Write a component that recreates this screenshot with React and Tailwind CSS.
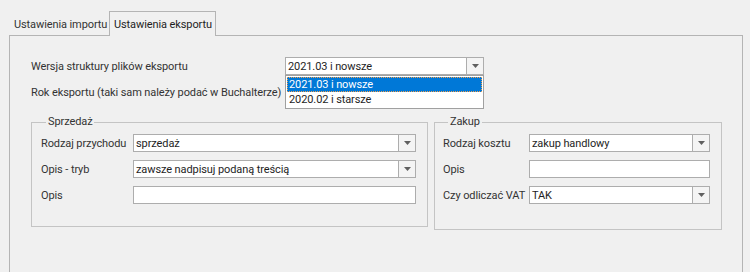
import React from "react";

const font = { fontFamily: 'Roboto, "Liberation Sans", Arial, sans-serif', letterSpacing: "-0.1px" };

function Arrow() {
  return (
    <svg width="7" height="4" viewBox="0 0 7 4">
      <polygon points="0,0 7,0 3.5,4" fill="#606060" />
    </svg>
  );
}

function Combo({ value, w }) {
  return (
    <div className={`flex h-[18px] border border-[#adadad] bg-white ${w}`}>
      <div className="flex flex-1 items-center whitespace-nowrap pl-[2px] text-[11px] leading-none text-[#1e1e1e]">{value}</div>
      <div className="flex w-[17px] items-center justify-center border-l border-[#adadad] bg-[#f4f4f4]">
        <Arrow />
      </div>
    </div>
  );
}

function TextBox({ w }) {
  return <div className={`h-[18px] border border-[#adadad] bg-white ${w}`} />;
}

function Row({ label, labelW, children }) {
  return (
    <div className="flex items-center">
      <div className={`${labelW} shrink-0 whitespace-nowrap text-[11px] leading-none text-[#333]`}>{label}</div>
      {children}
    </div>
  );
}

export default function App() {
  return (
    <div className="relative h-[272px] w-[750px] overflow-hidden bg-[#f0f0f0]" style={font}>
      <div className="flex items-end pl-[10px] pt-[11px]">
        <div className="flex h-[21px] w-[99px] items-center whitespace-nowrap pl-[4px] pt-[2px] text-[11px] text-[#333]">Ustawienia importu</div>
        <div className="relative z-10 -mb-px flex h-[25px] w-[107px] items-center whitespace-nowrap border border-b-0 border-[#b4b4b4] bg-[#f0f0f0] pl-[4px] pt-[3px] text-[11px] text-[#1e1e1e]">
          Ustawienia eksportu
        </div>
      </div>
      <div className="ml-[9px] h-[260px] w-[734px] border border-[#b4b4b4] pl-[21px] pt-[21px]">
        <div className="flex flex-col gap-[8px]">
          <Row label="Wersja struktury plików eksportu" labelW="w-[254px]">
            <Combo value="2021.03 i nowsze" w="w-[199px]" />
          </Row>
          <Row label="Rok eksportu (taki sam należy podać w Buchalterze)" labelW="w-[254px]">
            <div className="h-[18px] w-[199px]" />
          </Row>
        </div>
        <div className="mt-[14px] flex items-start gap-[6px]">
          <fieldset className="h-[112px] w-[396px] border border-[#c4c4c4] pl-[9px] pr-[11px]">
            <legend className="ml-[5px] px-[2px] text-[11px] leading-[14px] text-[#333]">Sprzedaż</legend>
            <div className="mt-[5px] flex flex-col gap-[8px]">
              <Row label="Rodzaj przychodu" labelW="w-[92px]">
                <Combo value="sprzedaż" w="w-[283px]" />
              </Row>
              <Row label="Opis - tryb" labelW="w-[92px]">
                <Combo value="zawsze nadpisuj podaną treścią" w="w-[283px]" />
              </Row>
              <Row label="Opis" labelW="w-[92px]">
                <TextBox w="w-[283px]" />
              </Row>
            </div>
          </fieldset>
          <fieldset className="h-[115px] w-[288px] border border-[#c4c4c4] pl-[8px]">
            <legend className="ml-[5px] px-[2px] text-[11px] leading-[14px] text-[#333]">Zakup</legend>
            <div className="mt-[5px] flex flex-col gap-[8px]">
              <Row label="Rodzaj kosztu" labelW="w-[86px]">
                <Combo value="zakup handlowy" w="w-[181px]" />
              </Row>
              <Row label="Opis" labelW="w-[86px]">
                <TextBox w="w-[181px]" />
              </Row>
              <Row label="Czy odliczać VAT" labelW="w-[86px]">
                <Combo value="TAK" w="w-[181px]" />
              </Row>
            </div>
          </fieldset>
        </div>
      </div>
      <div className="absolute left-[285px] top-[75px] z-20 flex w-[199px] flex-col border border-[#a0a0a0] bg-white p-px text-[11px] leading-none">
        <div className="flex h-[15px] items-center whitespace-nowrap border border-dotted border-[#f0a050] bg-[#0078d7] pl-px text-white">2021.03 i nowsze</div>
        <div className="flex h-[15px] items-center whitespace-nowrap pl-[2px] text-[#1e1e1e]">2020.02 i starsze</div>
      </div>
    </div>
  );
}
